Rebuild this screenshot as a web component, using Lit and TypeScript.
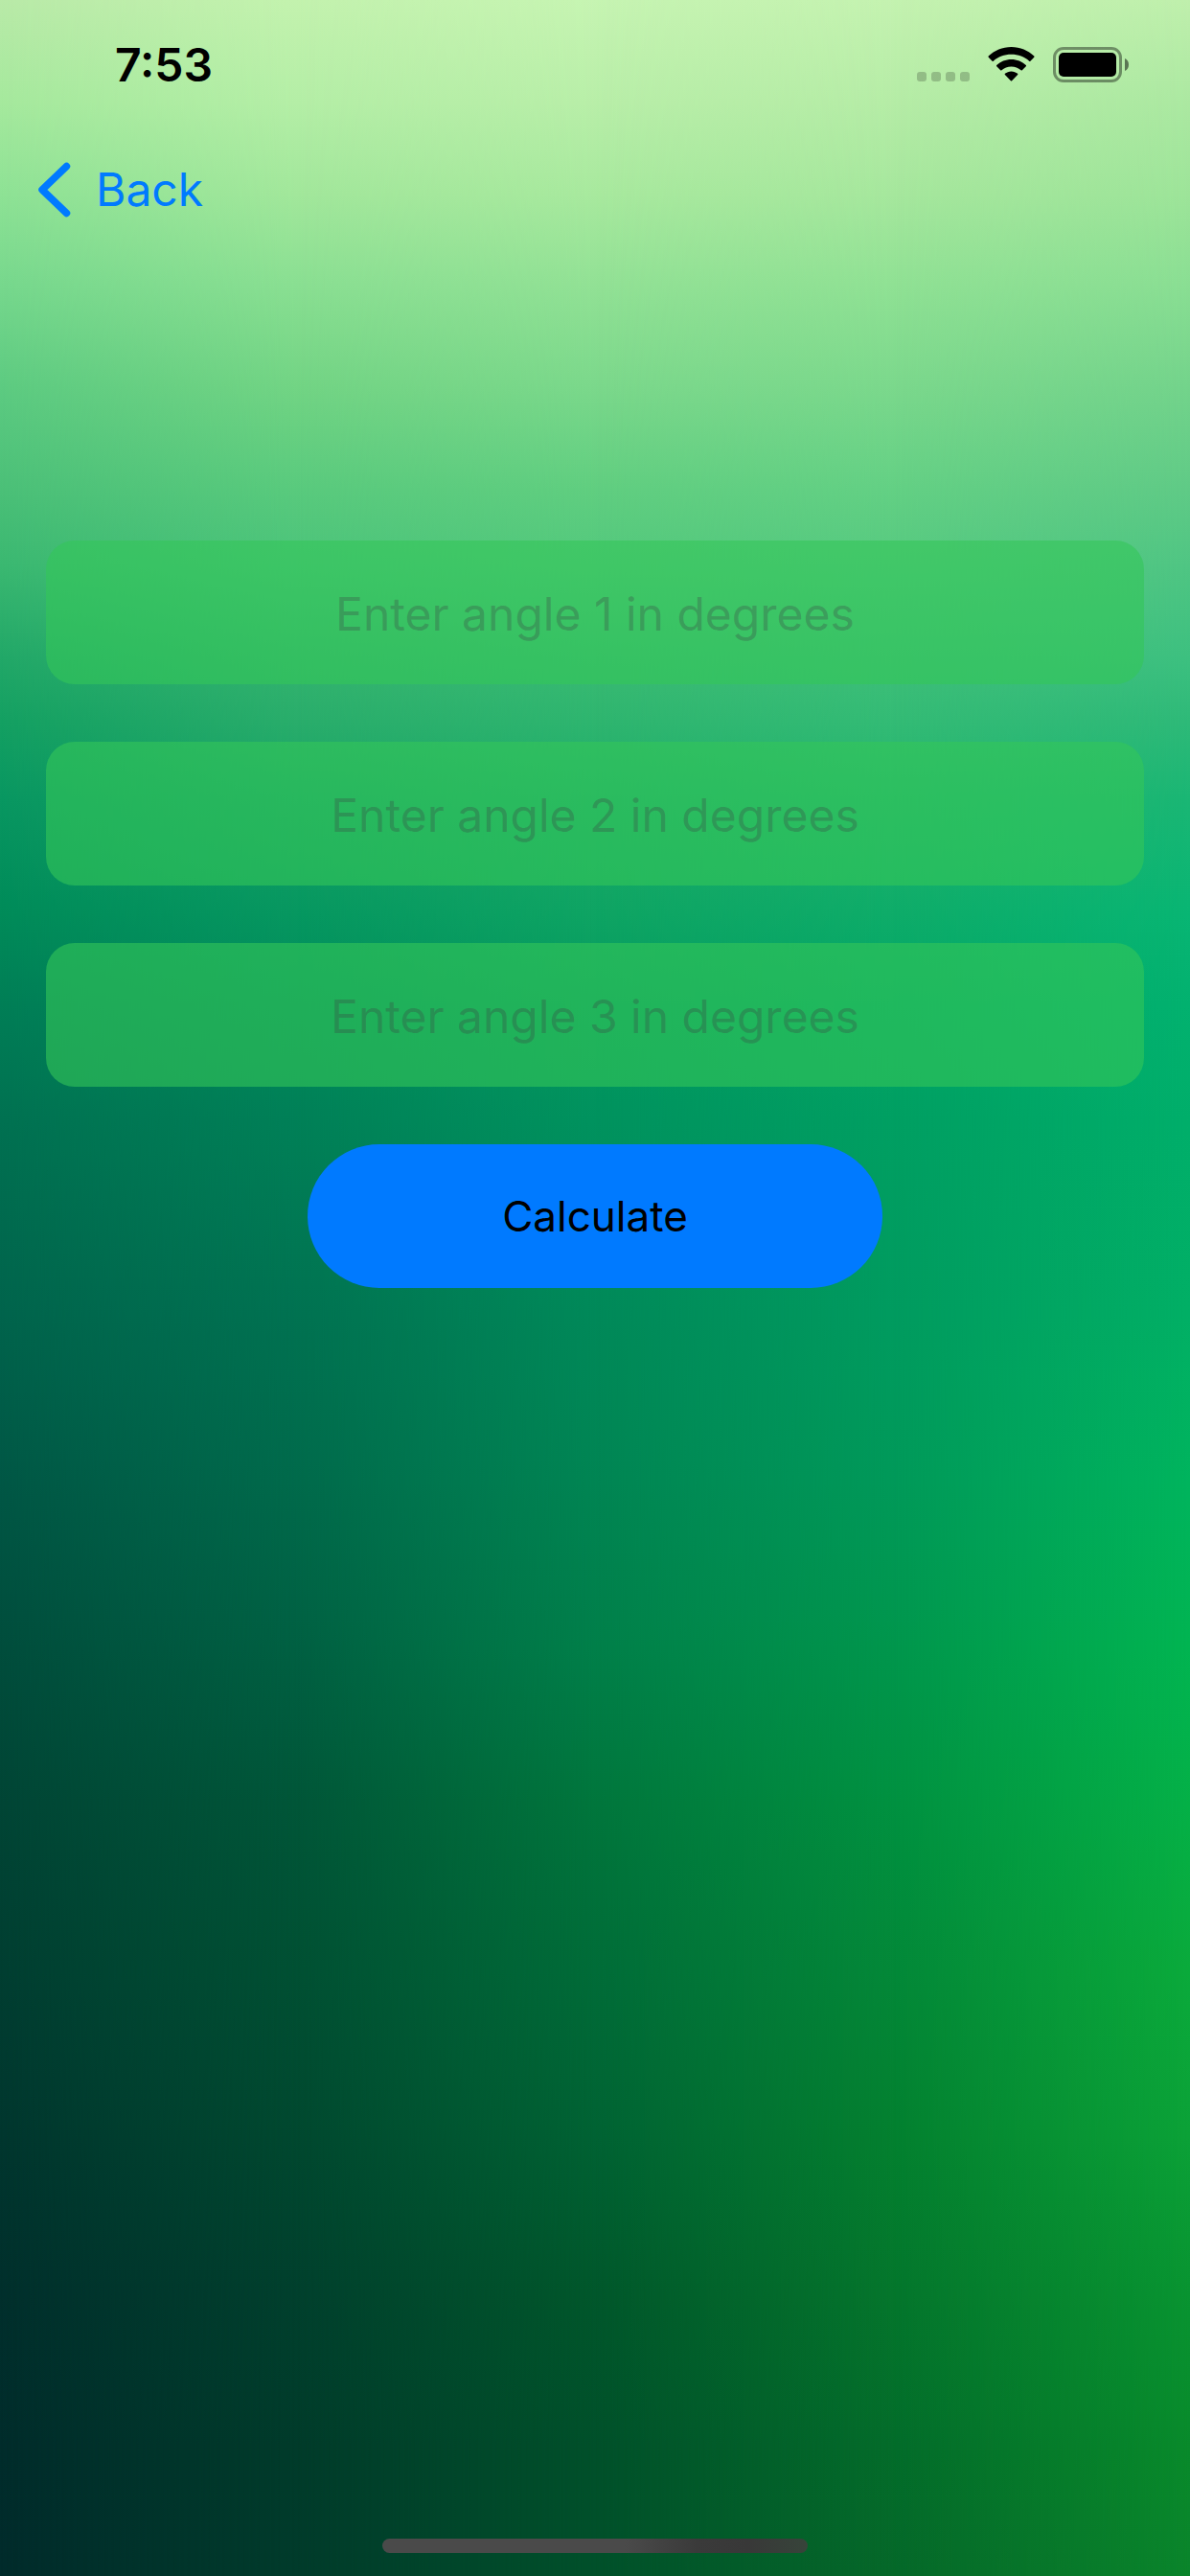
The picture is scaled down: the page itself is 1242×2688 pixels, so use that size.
import { LitElement, html, css, svg } from "lit";
import { customElement, state } from "lit/decorators.js";

/* Rows of the backdrop mesh: [height in % of the screen, colours from left to right]. */
const MESH: [number, string[]][] = [
  [0, ["#b9eaa8", "#c3f2ae", "#c6f4b2", "#c4f2b0", "#bfefac"]],
  [4, ["#a5e99d", "#b4eea6", "#b8eea8", "#b5eca6", "#abe8a1"]],
  [7.5, ["#8ee295", "#a2e79b", "#a8e99e", "#a6e79d", "#9de499"]],
  [11, ["#77d88d", "#8adf92", "#92e195", "#90e194", "#8ade93"]],
  [15, ["#5dcb81", "#72d484", "#7bd88b", "#7bd88c", "#73d38b"]],
  [19, ["#4bc078", "#59ca7d", "#60ce80", "#63d084", "#5fca86"]],
  [22, ["#3ab871", "#4ac37a", "#52c87c", "#55c980", "#4fc583"]],
  [25.5, ["#22a868", "#35b46f", "#3bbb73", "#40bf79", "#3dc080"]],
  [28, ["#14a062", "#29ad6b", "#2eb56f", "#33bb75", "#2eb978"]],
  [31, ["#099761", "#17a266", "#1dab69", "#21b36d", "#1ab674"]],
  [35.5, ["#008b59", "#069760", "#0ea463", "#0eac69", "#08b573"]],
  [39, ["#007e56", "#008b5b", "#05995f", "#02a566", "#02b16f"]],
  [43.5, ["#007151", "#008057", "#00925e", "#009f62", "#00ae6a"]],
  [51, ["#00644c", "#007251", "#008959", "#009b5f", "#01af65"]],
  [57.5, ["#005745", "#006a4b", "#008553", "#009959", "#00b45d"]],
  [64, ["#004d3c", "#006042", "#007f49", "#00964c", "#01b451"]],
  [70, ["#004535", "#005638", "#00763c", "#009140", "#04b047"]],
  [76.5, ["#003e31", "#005033", "#006c38", "#038838", "#0aaa3b"]],
  [83, ["#00362e", "#00482f", "#006233", "#03802f", "#0ba137"]],
  [89, ["#002f2c", "#00402d", "#00572b", "#04762c", "#089431"]],
  [95, ["#002c2b", "#003b2a", "#00502a", "#036c2a", "#088a2b"]],
  [100, ["#002b2b", "#003b2b", "#00502a", "#056829", "#0a842b"]],
];

@customElement("mesh-backdrop")
class MeshBackdrop extends LitElement {
  static styles = css`
    :host {
      display: block;
    }
    .mesh {
      display: block;
      width: 100%;
      height: 100%;
    }
  `;

  render() {
    const columns = MESH[0][1].map((_, i) => i);
    const step = 100 / (columns.length - 1);
    return html`<svg class="mesh" viewBox="0 0 100 100" preserveAspectRatio="none" aria-hidden="true">
      <defs>
        ${columns.map(
          (i) => svg`<linearGradient id=${`column${i}`} x1="0" y1="0" x2="0" y2="1">
            ${MESH.map(([at, colours]) => svg`<stop offset=${at / 100} stop-color=${colours[i]}></stop>`)}
          </linearGradient>`
        )}
        ${columns.slice(1).map(
          (i) => svg`<linearGradient id=${`ramp${i}`} gradientUnits="userSpaceOnUse"
              x1=${(i - 1) * step} y1="0" x2=${i * step} y2="0">
              <stop offset="0" stop-color="#fff" stop-opacity="0"></stop>
              <stop offset="1" stop-color="#fff"></stop>
            </linearGradient>
            <mask id=${`fade${i}`} maskUnits="userSpaceOnUse" x="0" y="0" width="100" height="100">
              <rect width="100" height="100" fill=${`url(#ramp${i})`}></rect>
            </mask>`
        )}
      </defs>
      ${columns.map((i) =>
        i === 0
          ? svg`<rect width="100" height="100" fill="url(#column0)"></rect>`
          : svg`<rect width="100" height="100" fill=${`url(#column${i})`} mask=${`url(#fade${i})`}></rect>`
      )}
    </svg>`;
  }
}

@customElement("status-bar")
class StatusBar extends LitElement {
  static styles = css`
    :host {
      display: flex;
      align-items: center;
      justify-content: space-between;
      height: 136px;
      padding: 0 64px 0 120px;
      color: #000;
    }
    .time {
      font-size: 48px;
      line-height: 60px;
      font-weight: 600;
    }
    .icons {
      display: flex;
      align-items: center;
      gap: 19px;
    }
    .icon {
      display: block;
    }
  `;

  render() {
    return html`
      <time class="time">7:53</time>
      <div class="icons">
        <svg class="icon" width="55" height="38" viewBox="0 0 55 38" role="img" aria-label="No signal">
          ${[0, 15, 30, 45].map(
            (x) => svg`<rect x=${x} y="26" width="10" height="10" rx="3" fill="#000" fill-opacity="0.2"></rect>`
          )}
        </svg>
        <svg class="icon" width="49" height="38" viewBox="0 0 49 38" role="img" aria-label="Wi-Fi">
          <path
            d="M24.500 0C15.300 0 6.900 3.600 .7 9.500Q.1 10.100 .7 10.700L4.600 14.700Q5.200 15.300 5.800 14.700C10.700 10.100 17.300 7.800 24.500 7.800S38.300 10.100 43.200 14.700Q43.800 15.300 44.400 14.700L48.300 10.700Q48.900 10.100 48.300 9.500C42.100 3.600 33.700 0 24.500 0Z"
          ></path>
          <path
            d="M24.500 13C18.600 13 13.200 15.300 9.200 19Q8.600 19.600 9.200 20.200L13.200 24.200Q13.800 24.800 14.400 24.200C17.100 21.800 20.600 20.400 24.500 20.400S31.900 21.800 34.600 24.200Q35.200 24.800 35.800 24.200L39.800 20.200Q40.400 19.600 39.800 19C35.800 15.300 30.400 13 24.500 13Z"
          ></path>
          <path
            d="M24.500 25.400C22 25.400 19.700 26.300 17.900 27.800Q17.300 28.400 17.900 29L23.900 35.200Q24.500 35.800 25.100 35.200L31.100 29Q31.700 28.400 31.100 27.800C29.300 26.300 27 25.400 24.500 25.400Z"
          ></path>
        </svg>
        <svg class="icon" width="79" height="38" viewBox="0 0 79 38" role="img" aria-label="Battery full">
          <rect
            x="1.500" y="1.500" width="69" height="34" rx="9.500"
            fill="none" stroke="#000" stroke-opacity="0.4" stroke-width="3"
          ></rect>
          <rect x="6" y="6" width="60" height="25" rx="5"></rect>
          <path d="M75 12C77.500 13 79 15.500 79 18.500S77.500 24 75 25Z" fill-opacity="0.500"></path>
        </svg>
      </div>
    `;
  }
}

@customElement("app-root")
class AppRoot extends LitElement {
  static styles = css`
    :host {
      position: relative;
      display: flex;
      flex-direction: column;
      min-height: 100vh;
      font-family: Inter, "Liberation Sans", sans-serif;
      isolation: isolate;
    }
    .backdrop {
      position: absolute;
      inset: 0;
      z-index: -1;
    }
    .nav {
      display: flex;
      align-items: center;
      height: 124px;
      padding: 0 40px;
    }
    .back {
      display: flex;
      align-items: center;
      gap: 26px;
      color: #007aff;
      font-size: 48px;
      line-height: 60px;
      text-decoration: none;
    }
    .chevron {
      display: block;
    }
    .form {
      flex: 1;
      display: flex;
      flex-direction: column;
      align-items: center;
      gap: 60px;
      padding: 304px 48px 60px;
    }
    .field {
      box-sizing: border-box;
      width: 100%;
      height: 150px;
      margin: 0;
      padding: 2px 48px 0;
      border: 0;
      border-radius: 30px;
      outline: 0;
      background: rgba(52, 199, 89, 0.6);
      color: #000;
      font: inherit;
      font-size: 48px;
      text-align: center;
    }
    .field::placeholder {
      color: rgba(60, 60, 67, 0.3);
      opacity: 1;
    }
    .calculate {
      width: 600px;
      max-width: 100%;
      height: 150px;
      padding: 0;
      border: 0;
      border-radius: 75px;
      background: #007aff;
      color: #000;
      font: inherit;
      font-size: 44px;
    }
    .home {
      align-self: center;
      width: 444px;
      height: 15px;
      margin-bottom: 24px;
      border-radius: 8px;
      background: linear-gradient(90deg, #4a4a4a 57%, #3a3a3a 74%, #383838 86%, #37443a 100%);
    }
  `;

  @state() private angles = ["", "", ""];

  private setAngle(index: number, event: Event) {
    const value = (event.target as HTMLInputElement).value;
    this.angles = this.angles.map((angle, i) => (i === index ? value : angle));
  }

  render() {
    return html`
      <mesh-backdrop class="backdrop"></mesh-backdrop>
      <status-bar></status-bar>
      <nav class="nav">
        <a class="back" href="#">
          <svg class="chevron" width="34" height="58" viewBox="0 0 34 58" aria-hidden="true">
            <path
              d="M29.500 4.500L4 29L29.500 53.500"
              fill="none" stroke="currentColor" stroke-width="7.500"
              stroke-linecap="round" stroke-linejoin="round"
            ></path>
          </svg>
          Back
        </a>
      </nav>
      <form class="form" @submit=${(event: Event) => event.preventDefault()}>
        ${this.angles.map(
          (angle, i) => html`<input
            class="field"
            type="text"
            inputmode="decimal"
            placeholder=${`Enter angle ${i + 1} in degrees`}
            aria-label=${`Enter angle ${i + 1} in degrees`}
            .value=${angle}
            @input=${(event: Event) => this.setAngle(i, event)}
          />`
        )}
        <button class="calculate" type="submit">Calculate</button>
      </form>
      <div class="home"></div>
    `;
  }
}
